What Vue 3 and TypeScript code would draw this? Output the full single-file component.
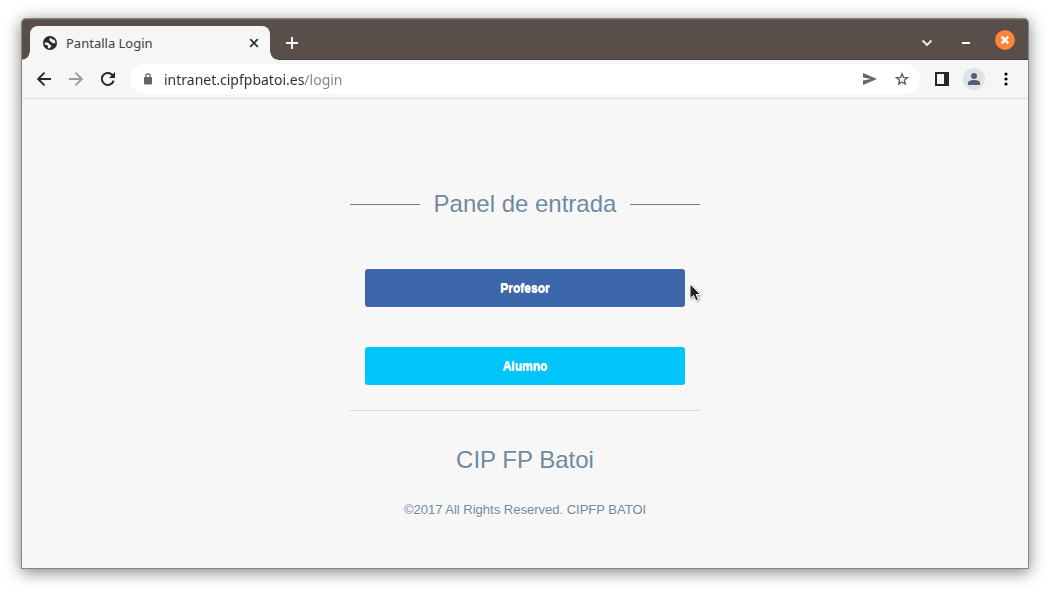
<script setup lang="ts">
import { ref } from 'vue'

interface Entry {
  label: string
  href: string
  kind: string
}

const address = ref('intranet.cipfpbatoi.es/login')
const entries: Entry[] = [
  { label: 'Profesor', href: '#profesor', kind: 'teacher' },
  { label: 'Alumno', href: '#alumno', kind: 'student' },
]
</script>

<template>
  <div class="desktop">
    <div class="window">
      <header class="titlebar">
        <div class="tab">
          <svg class="favicon" viewBox="0 0 14 14" aria-hidden="true">
            <circle cx="7" cy="7" r="7" fill="#26282a" />
            <path d="M8.2 1.7C6.6 2.1 6.2 3 6.4 4.2 6.8 5.3 7.8 5 8.3 6.1 8.8 7.3 10.4 7.4 12.4 7A5.5 5.5 0 0 0 10.9 3.2C10 4.2 8.6 3.6 8.2 1.7Z" fill="#f6f6f6" />
            <path d="M1.6 6.7C3.6 6.1 6 6.4 6.4 8 6.8 9.2 8.6 8.6 8.4 10.2 8.2 11.2 7 11.2 6.6 12.4A5.5 5.5 0 0 1 4.6 11.9C5.2 10.8 5.2 9.7 4.2 9.2 3.2 8.8 2.2 9 1.8 8.6Z" fill="#f6f6f6" />
          </svg>
          <span class="tab-title">Pantalla Login</span>
          <button class="tab-close" type="button" aria-label="Cerrar pestaña">
            <svg width="10" height="10" viewBox="0 0 10 10"><path d="M1.2 1.2 8.8 8.8M8.8 1.2 1.2 8.8" stroke="#303234" stroke-width="1.7" /></svg>
          </button>
        </div>
        <button class="new-tab" type="button" aria-label="Nueva pestaña">
          <svg width="12" height="12" viewBox="0 0 12 12"><path d="M6 0V12M0 6H12" stroke="#fff" stroke-width="1.8" /></svg>
        </button>
        <div class="controls">
          <button type="button" aria-label="Buscar pestañas">
            <svg width="12" height="8" viewBox="0 0 12 8"><path d="M1.5 1.5 6 6 10.5 1.5" fill="none" stroke="#f2f0ef" stroke-width="1.8" /></svg>
          </button>
          <button type="button" aria-label="Minimizar">
            <svg width="8" height="8" viewBox="0 0 8 8"><path d="M0 4H8" stroke="#fff" stroke-width="2" /></svg>
          </button>
          <button class="close" type="button" aria-label="Cerrar">
            <svg width="20" height="20" viewBox="0 0 20 20"><circle cx="10" cy="10" r="10" fill="#fc8537" /><path d="M6.7 6.7 13.3 13.3M13.3 6.7 6.7 13.3" stroke="#fff" stroke-width="2.4" /></svg>
          </button>
        </div>
      </header>

      <nav class="toolbar" aria-label="Navegación">
        <div class="group">
          <button class="tool" type="button" aria-label="Atrás">
            <svg width="14" height="14" viewBox="0 0 14 14"><path d="M14 7H1.5M7.5 .7 1.2 7 7.5 13.3" fill="none" stroke="#28292b" stroke-width="1.9" /></svg>
          </button>
          <button class="tool" type="button" aria-label="Adelante" disabled>
            <svg width="14" height="14" viewBox="0 0 14 14"><path d="M0 7H12.5M6.5 .7 12.8 7 6.5 13.3" fill="none" stroke="#9b9c9d" stroke-width="1.9" /></svg>
          </button>
          <button class="tool" type="button" aria-label="Recargar">
            <svg width="14" height="14" viewBox="0 0 14 14"><path d="M12.6 8.6A6 6 0 1 1 11.2 2.8L12 3.6" fill="none" stroke="#28292b" stroke-width="2" /><path d="M14 0V6H8Z" fill="#28292b" /></svg>
          </button>
        </div>
        <div class="address">
          <svg class="lock" width="8" height="12" viewBox="0 0 8 12" aria-hidden="true"><path d="M1.8 5V3A2.2 2.2 0 0 1 6.2 3V5" fill="none" stroke="#5f6368" stroke-width="1.2" /><rect y="4" width="8" height="7.5" rx="1" fill="#5f6368" /></svg>
          <input v-model="address" class="url" type="text" aria-label="Dirección" spellcheck="false" />
          <button class="tool" type="button" aria-label="Compartir">
            <svg width="14" height="12" viewBox="0 0 14 12"><path d="M0 0 14 6 0 12V7.5L8 6 0 4.5Z" fill="#66686a" /></svg>
          </button>
          <button class="tool" type="button" aria-label="Añadir a favoritos">
            <svg width="14" height="14" viewBox="0 0 14 14"><path d="m7 1.8 1.5 3.6 3.9.3-3 2.5.9 3.8L7 10 3.7 12l.9-3.8-3-2.5 3.9-.3Z" fill="none" stroke="#5c5e60" stroke-width="1.4" /></svg>
          </button>
        </div>
        <div class="group">
          <button class="tool" type="button" aria-label="Panel lateral">
            <svg width="14" height="14" viewBox="0 0 14 14"><path fill="#242628" fill-rule="evenodd" d="M0 0H14V14H0ZM2 2V12H9V2Z" /></svg>
          </button>
          <button class="tool" type="button" aria-label="Perfil">
            <svg width="22" height="22" viewBox="0 0 22 22"><circle cx="11" cy="11" r="11" fill="#dee1e6" /><circle cx="11" cy="8" r="3" fill="#506070" /><path d="M5 17V15C5 12.8 9 12 11 12S17 12.8 17 15V17Z" fill="#506070" /></svg>
          </button>
          <button class="tool" type="button" aria-label="Menú">
            <svg width="4" height="14" viewBox="0 0 4 14"><circle cx="2" cy="2" r="1.6" /><circle cx="2" cy="7" r="1.6" /><circle cx="2" cy="12" r="1.6" /></svg>
          </button>
        </div>
      </nav>

      <main class="page">
        <section class="panel">
          <h1 class="heading ruled">Panel de entrada</h1>
          <div class="entries">
            <a v-for="entry in entries" :key="entry.label" class="entry" :class="entry.kind" :href="entry.href">
              {{ entry.label }}
              <svg v-if="entry.kind === 'teacher'" class="pointer" width="14" height="20" viewBox="0 0 14 20" aria-hidden="true">
                <path d="M1 1V15.5L4.5 12.4 6.9 17.7 9.4 16.5 7.2 11.5H11.5Z" fill="#242424" stroke="#fff" stroke-width="1" />
              </svg>
            </a>
          </div>
          <footer class="credits">
            <h2 class="heading">CIP FP Batoi</h2>
            <p>©2017 All Rights Reserved. CIPFP BATOI</p>
          </footer>
        </section>
      </main>
    </div>
  </div>
</template>

<style>
body {
  margin: 0;
  background: #fff;
}
</style>

<style scoped>
.desktop {
  box-sizing: border-box;
  display: flex;
  min-height: 100vh;
  padding: 19px 22px 25px;
}

.window {
  display: flex;
  flex: 1;
  flex-direction: column;
  min-width: 0;
  border-radius: 4px 4px 0 0;
  background: #f7f7f7;
  box-shadow: 0 0 0 1px #858585, 0 3px 16px 1px rgba(0, 0, 0, 0.5);
  font-family: "Noto Sans", "Open Sans", sans-serif;
}

button {
  display: flex;
  align-items: center;
  justify-content: center;
  margin: 0;
  padding: 0;
  border: 0;
  background: none;
}

svg {
  display: block;
  flex: none;
}

.titlebar {
  box-sizing: border-box;
  display: flex;
  align-items: flex-end;
  height: 41px;
  padding: 0 3px 0 8px;
  border-radius: 4px 4px 0 0;
  background: #594f4a;
  box-shadow: inset 0 -1px #463d3b, inset 0 1px #6a615d;
}

.tab {
  position: relative;
  box-sizing: border-box;
  display: flex;
  align-items: center;
  width: 240px;
  height: 34px;
  padding: 0 8px 0 13px;
  border-radius: 8px 8px 0 0;
  background: #f6f6f6;
}

.tab::before,
.tab::after {
  position: absolute;
  bottom: 0;
  width: 8px;
  height: 8px;
  content: "";
}

.tab::before {
  right: 100%;
  background: radial-gradient(circle at 0 0, transparent 7px, #f6f6f6 8px);
}

.tab::after {
  left: 100%;
  background: radial-gradient(circle at 100% 0, transparent 7px, #f6f6f6 8px);
}

.favicon {
  width: 14px;
  height: 14px;
  margin-right: 9px;
}

.tab-title {
  flex: 1;
  color: #3c4043;
  font-size: 13px;
  line-height: 20px;
}

.tab-close {
  width: 16px;
  height: 16px;
}

.new-tab {
  width: 44px;
  height: 34px;
}

.controls {
  display: flex;
  align-items: flex-end;
  margin-left: auto;
}

.controls button {
  width: 39px;
  height: 34px;
}

.controls .close {
  width: 40px;
  height: 40px;
}

.toolbar {
  display: flex;
  gap: 6px;
  padding: 4px 6px;
  border-bottom: 1px solid #dedede;
  background: #f6f6f6;
}

.group {
  display: flex;
}

.tool {
  width: 32px;
  height: 30px;
}

.address {
  display: flex;
  flex: 1;
  align-items: center;
  min-width: 0;
  padding: 0 2px 0 14px;
  border-radius: 15px;
  background: #fff;
}

.lock {
  margin-right: 12px;
}

.url {
  flex: 1;
  min-width: 0;
  height: 30px;
  padding: 0;
  border: 0;
  outline: 0;
  background: linear-gradient(90deg, #2b2d2f 140px, #808386 140px);
  background-clip: text;
  color: transparent;
  font: 14px "Noto Sans", "Open Sans", sans-serif;
}

.page {
  display: flex;
  flex: 1;
  justify-content: center;
  padding: 95px 16px 48px;
}

.panel {
  width: 350px;
  color: #6f899f;
  font: 13px/20px "Liberation Sans", Arial, sans-serif;
  text-align: center;
  text-shadow: 0 1px 0 #fff;
}

.heading {
  margin: 0;
  font-size: 24px;
  font-weight: 400;
  line-height: 20px;
}

.ruled {
  display: flex;
  align-items: center;
  justify-content: space-between;
}

.ruled::before,
.ruled::after {
  width: 20%;
  height: 1px;
  background: #7e7e7e;
  content: "";
}

.entries {
  display: grid;
  gap: 40px;
  padding: 55px 15px 25px;
}

.entry {
  position: relative;
  border-radius: 3px;
  color: #fff;
  font-size: 12px;
  font-weight: 700;
  line-height: 38px;
  text-decoration: none;
}

.teacher {
  background: #3d67ab;
}

.student {
  background: #00c5fb;
}

.pointer {
  position: absolute;
  top: 14px;
  left: calc(100% + 4px);
  filter: drop-shadow(1px 1px 1px rgba(0, 0, 0, 0.35));
}

.credits {
  padding-top: 39px;
  border-top: 1px solid #d8d8d8;
}

.credits p {
  margin: 30px 0 0;
}
</style>
